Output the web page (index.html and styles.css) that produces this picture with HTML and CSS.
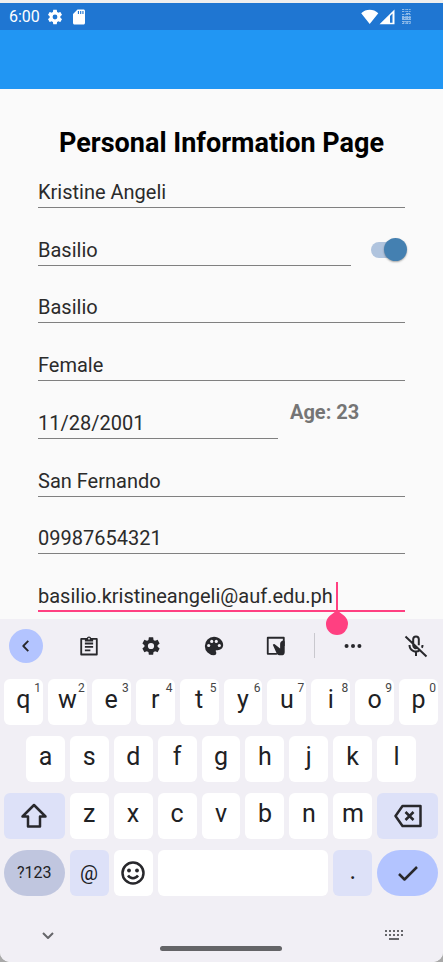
FILE: index.html
```html
<!DOCTYPE html>
<html lang="en">
<head>
<meta charset="utf-8">
<meta name="viewport" content="width=device-width, initial-scale=1">
<title>Personal Information Page</title>
<link rel="stylesheet" href="styles.css">
</head>
<body>
<div class="screen">
  <header class="status-bar">
    <div class="status-group">
      <span class="clock">6:00</span>
      <svg class="status-icon" viewBox="0 0 24 24" aria-hidden="true"><path fill-rule="evenodd" d="M19.14 12.94c.04-.3.06-.61.06-.94 0-.32-.02-.64-.07-.94l2.03-1.58c.18-.14.23-.41.12-.61l-1.92-3.32c-.12-.22-.37-.29-.59-.22l-2.39.96c-.5-.38-1.03-.7-1.62-.94l-.36-2.54c-.04-.24-.24-.41-.48-.41h-3.84c-.24 0-.43.17-.47.41l-.36 2.54c-.59.24-1.13.57-1.62.94l-2.39-.96c-.22-.08-.47 0-.59.22L2.74 8.87c-.12.21-.08.47.12.61l2.03 1.58c-.05.3-.09.63-.09.94s.02.64.07.94l-2.03 1.58c-.18.14-.23.41-.12.61l1.92 3.32c.12.22.37.29.59.22l2.39-.96c.5.38 1.03.7 1.62.94l.36 2.54c.05.24.24.41.48.41h3.84c.24 0 .44-.17.47-.41l.36-2.54c.59-.24 1.13-.56 1.62-.94l2.39.96c.22.08.47 0 .59-.22l1.92-3.32c.12-.22.07-.47-.12-.61l-2.01-1.58zM12 15.2a3.2 3.2 0 1 1 0-6.4 3.2 3.2 0 0 1 0 6.4z"/></svg>
      <svg class="status-icon" viewBox="0 0 24 24" aria-hidden="true"><path d="M18 2h-8L4 8v12c0 1.1.9 2 2 2h12c1.1 0 2-.9 2-2V4c0-1.1-.9-2-2-2zm-6 6h-1.500V4H12v4zm3 0h-1.500V4H15v4zm3 0h-1.500V4H18v4z"/></svg>
    </div>
    <div class="status-group status-right">
      <svg class="radio-icons" viewBox="0 0 34 16" aria-hidden="true"><path d="M.2 4.2C5-.4 12.500-.4 17.300 4.200L8.700 15zM18.500 15.200L33.500.6V15.200z"/><path class="signal-gap" d="M29 7v6.700h2.500V4.600z"/></svg>
      <svg class="battery-icon" viewBox="0 0 9 15" aria-hidden="true"><path d="M0 .5h9M0 2.500h9M0 5.500h9M0 7.500h9M0 9.500h9M0 12.500h9M0 14.500h9" stroke-dasharray="2 .7 1 .5"/><path d="M0 10.500h9M1 13.500l2-1 2 1 2-1 2 1M4 4.500h4M0 8.500h9"/></svg>
    </div>
  </header>
  <div class="app-bar"></div>

  <main class="page">
    <h1>Personal Information Page</h1>
    <form class="form">
      <div class="row"><input class="field" type="text" aria-label="First name" value="Kristine Angeli"></div>
      <div class="row row-switch">
        <input class="field" type="text" aria-label="Middle name" value="Basilio">
        <input class="switch" type="checkbox" role="switch" aria-label="Has middle name" checked>
      </div>
      <div class="row"><input class="field" type="text" aria-label="Last name" value="Basilio"></div>
      <div class="row"><input class="field" type="text" aria-label="Gender" value="Female"></div>
      <div class="row row-age">
        <input class="field" id="birthdate" type="text" aria-label="Birth date" value="11/28/2001">
        <output class="age" for="birthdate">Age: 23</output>
      </div>
      <div class="row"><input class="field" type="text" aria-label="City" value="San Fernando"></div>
      <div class="row"><input class="field" type="tel" aria-label="Phone" value="09987654321"></div>
      <div class="row">
        <input class="field field-active" type="email" aria-label="Email" value="basilio.kristineangeli@auf.edu.ph">
        <svg class="caret" viewBox="0 0 24 56" aria-hidden="true"><path d="M11 1h2v29l6.500 5A11 11 0 1 1 4.500 35L11 30z"/></svg>
      </div>
    </form>
  </main>

  <section class="keyboard" aria-label="Keyboard">
    <div class="toolbar">
      <div class="tools">
        <button class="tool tool-back" aria-label="Back"><svg viewBox="0 0 24 24"><path class="line" d="M14.500 6.500 9 12l5.500 5.500"/></svg></button>
        <button class="tool" aria-label="Clipboard"><svg viewBox="0 0 24 24"><path class="line" d="M3.500 4.300h17v17h-17zM7.500 9.300h9M7.500 13h9M7.500 16.700h6"/><path d="M7.500 3.500h2a2.600 2.600 0 0 1 5 0h2V7h-9z"/><circle class="hole" cx="12" cy="4" r="1"/></svg></button>
        <button class="tool" aria-label="Settings"><svg viewBox="0 0 24 24"><path fill-rule="evenodd" d="M19.14 12.94c.04-.3.06-.61.06-.94 0-.32-.02-.64-.07-.94l2.03-1.58c.18-.14.23-.41.12-.61l-1.92-3.32c-.12-.22-.37-.29-.59-.22l-2.39.96c-.5-.38-1.03-.7-1.62-.94l-.36-2.54c-.04-.24-.24-.41-.48-.41h-3.84c-.24 0-.43.17-.47.41l-.36 2.54c-.59.24-1.13.57-1.62.94l-2.39-.96c-.22-.08-.47 0-.59.22L2.74 8.87c-.12.21-.08.47.12.61l2.03 1.58c-.05.3-.09.63-.09.94s.02.64.07.94l-2.03 1.58c-.18.14-.23.41-.12.61l1.92 3.32c.12.22.37.29.59.22l2.39-.96c.5.38 1.03.7 1.62.94l.36 2.54c.05.24.24.41.48.41h3.84c.24 0 .44-.17.47-.41l.36-2.54c.59-.24 1.13-.56 1.62-.94l2.39.96c.22.08.47 0 .59-.22l1.92-3.32c.12-.22.07-.47-.12-.61l-2.01-1.58zM12 15.4a3.4 3.4 0 1 1 0-6.8 3.4 3.4 0 0 1 0 6.8z"/></svg></button>
        <button class="tool" aria-label="Themes"><svg viewBox="0 0 24 24"><path d="M12 2a10 10 0 0 0 0 20c1.400 0 2.500-1.100 2.500-2.500 0-.6-.2-1.200-.6-1.700-.4-.4 0-1.300.6-1.300H16c3.300 0 6-2.200 6-5.500C22 6 17.500 2 12 2z"/><g class="hole"><circle cx="6.200" cy="11.500" r="1.700"/><circle cx="9.500" cy="7" r="1.700"/><circle cx="14.500" cy="7" r="1.700"/><circle cx="17.800" cy="11.500" r="1.700"/></g></svg></button>
        <button class="tool" aria-label="Handwriting"><svg viewBox="0 0 24 24"><path class="line" d="M13 20.500H3V3h17.500v9"/><path d="M8.500 10.500c1-1 2-.8 2.800 0l5.200 4.200V9.500c0-2 2-3.500 3.500-3.500 1.200 0 1.500 1 1.500 2v10.500c0 2-.9 3.500-2.500 3.500h-3.500c-1.300 0-2-.6-2.600-1.600z"/></svg></button>
      </div>
      <span class="divider"></span>
      <div class="tools">
        <button class="tool" aria-label="More"><svg viewBox="0 0 24 24"><circle cx="5" cy="12" r="2.200"/><circle cx="12" cy="12" r="2.200"/><circle cx="19" cy="12" r="2.200"/></svg></button>
        <button class="tool" aria-label="Microphone off"><svg class="mic" viewBox="0 0 24 24"><path class="line" d="M9.200 10.500V5.300a2.800 2.800 0 0 1 5.600 0v6M5.500 11a6.500 6.500 0 0 0 10.300 5.300M18.500 11c0 1-.2 1.900-.6 2.700M12 17.500V22M9.200 9.500v2a2.800 2.800 0 0 0 4 2.400M1.500 2.500l21 20"/></svg></button>
      </div>
    </div>

    <div class="keys">
      <div class="key-row row-top">
        <button class="key">q<sup>1</sup></button><button class="key">w<sup>2</sup></button><button class="key">e<sup>3</sup></button><button class="key">r<sup>4</sup></button><button class="key">t<sup>5</sup></button><button class="key">y<sup>6</sup></button><button class="key">u<sup>7</sup></button><button class="key">i<sup>8</sup></button><button class="key">o<sup>9</sup></button><button class="key">p<sup>0</sup></button>
      </div>
      <div class="key-row row-home">
        <button class="key">a</button><button class="key">s</button><button class="key">d</button><button class="key">f</button><button class="key">g</button><button class="key">h</button><button class="key">j</button><button class="key">k</button><button class="key">l</button>
      </div>
      <div class="key-row row-wide">
        <button class="key key-soft" aria-label="Shift"><svg viewBox="0 0 28 28"><path class="line" d="M14 3 2.500 14.500H8v10h12v-10h5.500z"/></svg></button>
        <button class="key">z</button><button class="key">x</button><button class="key">c</button><button class="key">v</button><button class="key">b</button><button class="key">n</button><button class="key">m</button>
        <button class="key key-soft" aria-label="Delete"><svg viewBox="0 0 28 28"><path class="line" d="M8.500 4H26.500v20H8.500L1.500 14zM11.500 10l8 8M19.500 10l-8 8"/></svg></button>
      </div>
      <div class="key-row row-wide">
        <button class="key key-round key-symbols">?123</button>
        <button class="key key-soft key-at">@</button>
        <button class="key" aria-label="Emoji"><svg viewBox="0 0 28 28"><circle class="line" cx="14" cy="14" r="10.500"/><circle cx="10" cy="11.500" r="1.900"/><circle cx="18" cy="11.500" r="1.900"/><path class="line" d="M9 16.500c2.500 3.500 7.500 3.500 10 0"/></svg></button>
        <button class="key key-space" aria-label="Space"></button>
        <button class="key key-soft">.</button>
        <button class="key key-round key-enter" aria-label="Done"><svg viewBox="0 0 28 28"><path class="line" d="M5 15 10.500 20.500 23 8"/></svg></button>
      </div>
    </div>

    <nav class="nav-bar">
      <button class="nav-button" aria-label="Hide keyboard"><svg viewBox="0 0 20 20"><path class="line" d="m5 8 5 5 5-5"/></svg></button>
      <span class="home-pill"></span>
      <button class="nav-button" aria-label="Switch keyboard"><svg viewBox="0 0 20 20"><path class="dots" d="M1 6h18M1 10h18"/><path class="line" d="M5 14h10"/></svg></button>
    </nav>
  </section>
</div>
</body>
</html>
```
FILE: styles.css
```css
* { box-sizing: border-box; }

body {
  margin: 0;
  background: #a9a9a9;
  font-family: Roboto, "Liberation Sans", sans-serif;
}

button {
  border: 0;
  padding: 0;
  background: none;
  color: inherit;
  font: inherit;
}

.screen {
  display: flex;
  flex-direction: column;
  min-height: 100vh;
  border-top: 3px solid #efefef;
  border-radius: 0 0 10px 10px;
  background: #fafafa;
  overflow: hidden;
}

/* Status bar */
.status-bar {
  display: flex;
  justify-content: space-between;
  align-items: center;
  height: 27px;
  padding: 0 32px 0 9px;
  background: #1f76d2;
  color: #fff;
  fill: #fff;
}
.status-group { display: flex; align-items: center; gap: 6px; }
.status-right { gap: 7px; }
.clock { font-size: 16px; line-height: 20px; }
.status-icon { width: 18px; height: 18px; }
.radio-icons { width: 34px; height: 16px; }
.signal-gap { fill: #1f76d2; }
.battery-icon { width: 9px; height: 15px; stroke: #8fbbe9; fill: none; }

.app-bar { height: 59px; background: #2196f3; }

/* Form */
.page {
  display: flex;
  flex: 1;
  flex-direction: column;
  padding: 36px 38px 7px;
}
h1 {
  margin: 0 -20px;
  font-size: 27px;
  font-weight: 700;
  line-height: 36px;
  height: 25px;
  text-align: center;
  color: #000;
}
.form {
  display: grid;
  flex: 1;
  grid-template-columns: minmax(0, 1fr);
  grid-auto-rows: 1fr;
}
.row {
  position: relative;
  display: flex;
  align-items: flex-end;
}
.field {
  flex: 1;
  min-width: 0;
  height: 36px;
  padding: 8px 0 3px;
  border: 0;
  border-bottom: 1px solid #808080;
  border-radius: 0;
  outline: 0;
  background: none;
  color: #2b2b2b;
  font: 20px/24px Roboto, "Liberation Sans", sans-serif;
}
.field-active { border-bottom: 2px solid #ff4081; }
.row-switch { gap: 20px; }
.row-age { gap: 12px; }
.age {
  width: 115px;
  padding-bottom: 15px;
  color: #757575;
  font-size: 20px;
  font-weight: 700;
  line-height: 24px;
}
.switch {
  position: relative;
  width: 34px;
  height: 16px;
  margin: 0 0 8px;
  border-radius: 8px;
  background: #b0c4de;
  appearance: none;
}
.switch::after {
  content: "";
  position: absolute;
  top: -4px;
  right: -2px;
  width: 23px;
  height: 23px;
  border-radius: 50%;
  background: #4480b1;
  box-shadow: 0 1px 2px rgba(0, 0, 0, .35);
}
.caret {
  position: absolute;
  left: 287px;
  bottom: -25px;
  width: 24px;
  height: 56px;
  fill: #ff4081;
}

/* Keyboard */
.keyboard { background: #f1eff5; color: #202124; fill: #28282c; }
.line {
  fill: none;
  stroke: #28282c;
  stroke-width: 2;
  stroke-linejoin: round;
}
.hole { fill: #f1eff5; }
.toolbar {
  display: grid;
  grid-template-columns: 284fr 1px 97fr;
  column-gap: 21px;
  align-items: center;
  height: 53px;
  padding: 0 10px 0 9px;
}
.tools { display: flex; justify-content: space-between; }
.tool {
  display: grid;
  place-items: center;
  width: 34px;
  height: 34px;
  border-radius: 50%;
}
.tool svg { width: 22px; height: 22px; }
.tool .mic { width: 24px; height: 24px; }
.tool-back { background: #b3c4ff; }
.divider { height: 25px; background: #c9c8ce; }

.keys { display: grid; gap: 11px; padding: 7px 5px 0 4px; }
.key-row { display: grid; gap: 5px; }
.row-top { grid-template-columns: repeat(10, 1fr); }
.row-home { grid-template-columns: repeat(9, 1fr); padding: 0 22px; }
.row-wide { grid-template-columns: 14fr repeat(7, 9fr) 14fr; }
.key {
  position: relative;
  display: grid;
  place-items: center;
  height: 46px;
  padding-bottom: 4px;
  border-radius: 6px;
  background: #fff;
  font-size: 25px;
  line-height: 30px;
}
.key:has(svg) { padding: 0; }
.key svg { width: 28px; height: 28px; }
.key .line { stroke-width: 2.5; }
.key sup {
  position: absolute;
  top: 2px;
  right: 2px;
  color: #444;
  font-size: 12px;
  line-height: 14px;
}
.key-soft { background: #dde1f8; }
.key-round { border-radius: 23px; }
.key-symbols { padding: 0; background: #c0c6df; font-size: 16px; }
.key-at { padding: 0; font-size: 20px; }
.key-space { grid-column: span 4; }
.key-enter { background: #b3c4ff; }

/* System navigation */
.nav-bar {
  display: flex;
  justify-content: space-between;
  align-items: center;
  height: 66px;
  padding: 12px 39px 0 38px;
}
.nav-button svg { display: block; width: 20px; height: 20px; }
.nav-bar .line { stroke: #66666a; }
.dots { fill: none; stroke: #66666a; stroke-width: 2; stroke-dasharray: 2 2; }
.home-pill {
  align-self: flex-end;
  width: 122px;
  height: 5px;
  margin-bottom: 11px;
  border-radius: 3px;
  background: #646467;
}
```
